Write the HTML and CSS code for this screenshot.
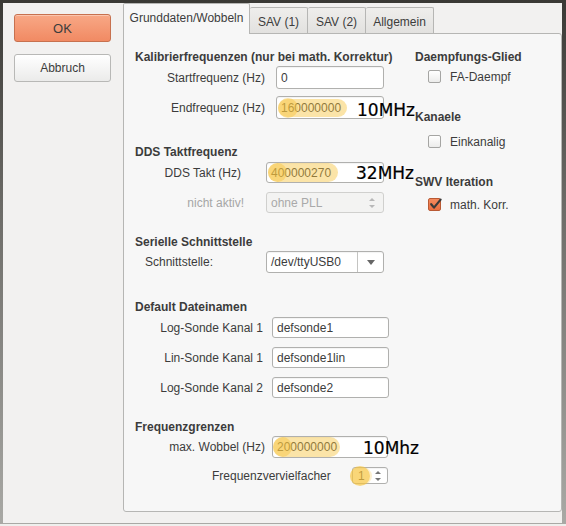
FILE: index.html
```html
<!DOCTYPE html>
<html>
<head>
<meta charset="utf-8">
<link rel="stylesheet" href="styles.css">
</head>
<body>
<div class="frame">
  <div class="window">
    <div class="side">
      <div class="btn btn-ok">OK</div>
      <div class="btn btn-cancel">Abbruch</div>
    </div>
    <div class="tabs">
      <div class="tabbar">
        <div class="tab active">Grunddaten/Wobbeln</div>
        <div class="tab t-sav1">SAV (1)</div>
        <div class="tab t-sav2">SAV (2)</div>
        <div class="tab t-allg">Allgemein</div>
      </div>
      <div class="panel">
        <div class="col-left">
          <div class="h">Kalibrierfrequenzen (nur bei math. Korrektur)</div>
          <div class="row r-start">
            <span class="lbl l-130">Startfrequenz (Hz)</span>
            <div class="field f-kal">0</div>
          </div>
          <div class="row r-end">
            <span class="lbl l-130">Endfrequenz (Hz)</span>
            <div class="field f-kal">160000000
              <span class="hl band b-end"></span><span class="hl dot d-end"></span>
              <span class="note n-end">10MHz</span>
            </div>
          </div>

          <div class="h h-dds">DDS Taktfrequenz</div>
          <div class="row r-dds">
            <span class="lbl l-dds">DDS Takt (Hz)</span>
            <div class="field f-dds">400000270
              <span class="hl band b-dds"></span><span class="hl dot d-dds"></span>
              <span class="note n-dds">32MHz</span>
            </div>
          </div>
          <div class="row r-pll">
            <span class="lbl l-pll disabled">nicht aktiv!</span>
            <div class="field f-pll disabled-field">ohne PLL
              <span class="spin spin-dis"><span class="up"></span><span class="dn"></span></span>
            </div>
          </div>

          <div class="h h-ser">Serielle Schnittstelle</div>
          <div class="row r-ser">
            <span class="lbl l-ser">Schnittstelle:</span>
            <div class="field f-ser"><span class="combo-text">/dev/ttyUSB0</span><span class="combo-btn"><span class="tri"></span></span></div>
          </div>

          <div class="h h-def">Default Dateinamen</div>
          <div class="row r-def1">
            <span class="lbl l-def">Log-Sonde Kanal 1</span>
            <div class="field f-def">defsonde1</div>
          </div>
          <div class="row r-def">
            <span class="lbl l-def">Lin-Sonde Kanal 1</span>
            <div class="field f-def">defsonde1lin</div>
          </div>
          <div class="row r-def">
            <span class="lbl l-def">Log-Sonde Kanal 2</span>
            <div class="field f-def">defsonde2</div>
          </div>

          <div class="h h-fg">Frequenzgrenzen</div>
          <div class="row r-mw">
            <span class="lbl l-mw">max. Wobbel (Hz)</span>
            <div class="field f-mw">200000000
              <span class="hl band b-mw"></span><span class="hl dot d-mw"></span>
              <span class="note n-mw">10Mhz</span>
            </div>
          </div>
          <div class="row r-fv">
            <span class="lbl l-fv">Frequenzvervielfacher</span>
            <div class="field f-fv">1
              <span class="spin"><span class="up"></span><span class="dn"></span></span>
              <span class="hl dot d-fv"></span><span class="hl band b-fv"></span>
            </div>
          </div>
        </div>
        <div class="col-right">
          <div class="h">Daempfungs-Glied</div>
          <div class="chkrow c1"><span class="chk"></span><span class="clbl">FA-Daempf</span></div>
          <div class="h h-kan">Kanaele</div>
          <div class="chkrow c2"><span class="chk"></span><span class="clbl">Einkanalig</span></div>
          <div class="h h-swv">SWV Iteration</div>
          <div class="chkrow c3"><span class="chk checked"><svg width="15" height="15" viewBox="0 0 15 15"><path d="M3.2 7.2 L6 10.6 L12.6 2.6" fill="none" stroke="#3a3a3a" stroke-width="2.2" stroke-linecap="round" stroke-linejoin="round"/></svg></span><span class="clbl">math. Korr.</span></div>
        </div>
      </div>
    </div>
  </div>
</div>
</body>
</html>
```

FILE: styles.css
```css
html, body {
  margin: 0;
  padding: 0;
  background: #efefed;
}
body {
  width: 566px;
  height: 526px;
  overflow: hidden;
  font-family: "Liberation Sans", Arial, sans-serif;
  font-size: 12px;
  color: #3c3c3c;
}
.frame {
  width: 566px;
  height: 524px;
  box-sizing: border-box;
  padding: 3px 4px 1px 3px;
  background: linear-gradient(#3a3935, #6d6c68 40%, #a9a9a5);
}
.window {
  width: 559px;
  height: 520px;
  background: #f2f1f0;
  display: flex;
}
.side {
  width: 120px;
  flex: none;
  padding-top: 11px;
  box-sizing: border-box;
}
.btn {
  margin-left: 11px;
  width: 97px;
  height: 28px;
  box-sizing: border-box;
  border-radius: 3px;
  display: flex;
  align-items: center;
  justify-content: center;
  color: #3c3c3c;
}
.btn-ok {
  font-size: 13px;
  background: linear-gradient(#f8a886, #f18a63);
  border: 1px solid #c7714f;
  box-shadow: inset 0 1px 0 rgba(255,255,255,0.35);
}
.btn-cancel {
  margin-top: 12px;
  background: linear-gradient(#ffffff, #ebebea);
  border: 1px solid #b8b8b6;
}
.tabs {
  width: 439px;
  flex: none;
  display: flex;
  flex-direction: column;
}
.tabbar {
  height: 30px;
  display: flex;
  align-items: flex-end;
}
.tab {
  box-sizing: border-box;
  height: 26px;
  border: 1px solid #b6b6b4;
  border-bottom: none;
  border-left: none;
  background: linear-gradient(#efeeec, #e2e1df);
  display: flex;
  align-items: center;
  justify-content: center;
  padding-top: 2px;
  border-radius: 2px 2px 0 0;
}
.tab.active {
  width: 127px;
  height: 31px;
  margin-bottom: -1px;
  border-left: 1px solid #b6b6b4;
  background: #f7f7f7;
  position: relative;
  z-index: 2;
  padding-top: 0;
  padding-bottom: 2px;
}
.t-sav1 { width: 58px; }
.t-sav2 { width: 58px; }
.t-allg { width: 68px; }
.panel {
  position: relative;
  z-index: 1;
  height: 479px;
  box-sizing: border-box;
  border: 1px solid #b6b6b4;
  border-radius: 0 3px 3px 3px;
  background: #f7f7f7;
  display: flex;
  padding: 16px 0 0 11px;
}
.col-left {
  width: 280px;
  flex: none;
}
.col-right {
  flex: 1;
}
.h {
  font-weight: bold;
  height: 14px;
  line-height: 14px;
  white-space: nowrap;
}
.row {
  display: flex;
  align-items: center;
  white-space: nowrap;
}
.lbl {
  flex: none;
  box-sizing: border-box;
  text-align: right;
}
.disabled { color: #a6a6a6; }
.field {
  position: relative;
  flex: none;
  box-sizing: border-box;
  border: 1px solid #b0b0ae;
  border-radius: 3px;
  background: #fff;
  box-shadow: inset 0 1px 1px rgba(0,0,0,0.05);
  display: flex;
  align-items: center;
  padding-left: 4px;
  color: #3c3c3c;
}
.r-start { margin-top: 2px; height: 23px; }
.r-end { margin-top: 7px; height: 23px; }
.l-130 { width: 130px; }
.f-kal { margin-left: 11px; width: 108px; height: 23px; }

.h-dds { margin-top: 26px; }
.r-dds { margin-top: 3px; height: 21px; }
.l-dds { width: 106px; }
.f-dds { margin-left: 25px; width: 118px; height: 21px; }
.r-pll { margin-top: 9px; height: 21px; }
.l-pll { width: 109px; }
.f-pll { margin-left: 22px; width: 118px; height: 21px; }
.disabled-field {
  background: #f3f3f2;
  border-color: #d0d0ce;
  color: #a9a9a9;
  box-shadow: none;
}

.h-ser { margin-top: 22px; }
.r-ser { margin-top: 2px; height: 22px; }
.l-ser { width: 131px; text-align: left; padding-left: 10px; }
.f-ser { width: 118px; height: 22px; padding-left: 0; }
.combo-text { flex: 1; padding-left: 4px; }
.combo-btn {
  width: 25px;
  height: 100%;
  border-left: 1px solid #c4c4c2;
  display: flex;
  align-items: center;
  justify-content: center;
}
.tri {
  width: 0;
  height: 0;
  border-left: 4px solid transparent;
  border-right: 4px solid transparent;
  border-top: 5px solid #666;
  margin-top: 1px;
}

.h-def { margin-top: 27px; }
.r-def1 { margin-top: 3px; height: 21px; }
.r-def { margin-top: 9px; height: 21px; }
.l-def { width: 128px; }
.f-def { margin-left: 9px; width: 117px; height: 21px; }

.h-fg { margin-top: 22px; }
.r-mw { margin-top: 2px; height: 22px; }
.l-mw { width: 130px; }
.f-mw { margin-left: 7px; width: 116px; height: 22px; }
.r-fv { margin-top: 9px; height: 17px; }
.l-fv { width: 217px; text-align: left; padding-left: 77px; }
.f-fv { width: 36px; height: 17px; padding-left: 5px; }

.spin {
  position: absolute;
  right: 6px;
  top: 0;
  bottom: 0;
  width: 7px;
  display: flex;
  flex-direction: column;
  justify-content: center;
  align-items: center;
  gap: 4px;
}
.spin .up {
  width: 0; height: 0;
  border-left: 3px solid transparent;
  border-right: 3px solid transparent;
  border-bottom: 3px solid #777;
}
.spin .dn {
  width: 0; height: 0;
  border-left: 3px solid transparent;
  border-right: 3px solid transparent;
  border-top: 3px solid #777;
}
.spin-dis { right: 8px; }
.spin-dis .up { border-bottom-color: #b8b8b8; }
.spin-dis .dn { border-top-color: #b8b8b8; }

.hl {
  position: absolute;
  background: rgba(246, 196, 62, 0.45);
  pointer-events: none;
}
.band { border-radius: 10px; }
.dot { border-radius: 50%; }
.b-end { left: 1px; top: 2px; width: 69px; height: 18px; }
.d-end { left: 1px; top: 1px; width: 20px; height: 20px; }
.b-dds { left: 1px; top: 0px; width: 70px; height: 19px; }
.d-dds { left: 1px; top: 0px; width: 19px; height: 19px; }
.b-mw { left: 0px; top: 0px; width: 67px; height: 20px; }
.d-mw { left: 0px; top: 0px; width: 19px; height: 20px; }
.d-fv { left: -3px; top: -2px; width: 20px; height: 20px; background: rgba(246, 196, 62, 0.6); }
.b-fv { left: -3px; top: -1px; width: 22px; height: 18px; border-radius: 9px; background: rgba(246, 196, 62, 0.25); }

.note {
  position: absolute;
  font-family: "DejaVu Sans", sans-serif;
  font-size: 17px;
  line-height: 17px;
  color: #000;
  white-space: nowrap;
  -webkit-text-stroke: 0.2px #000;
}
.n-end { left: 80px; top: 5px; }
.n-dds { left: 89px; top: 2px; }
.n-mw { left: 90px; top: 3px; }

.chkrow {
  display: flex;
  align-items: center;
  height: 13px;
  white-space: nowrap;
}
.c1 { margin-top: 6px; }
.c2 { margin-top: 11px; }
.c3 { margin-top: 9px; }
.h-kan { margin-top: 27px; }
.h-swv { margin-top: 27px; }
.chk {
  position: relative;
  margin-left: 13px;
  width: 13px;
  height: 13px;
  box-sizing: border-box;
  border: 1px solid #a5a5a3;
  border-radius: 2px;
  background: linear-gradient(#ffffff, #ececeb);
  flex: none;
}
.chk.checked {
  background: linear-gradient(#f48a5e, #ea6f40);
  border-color: #b95a34;
}
.chk svg {
  position: absolute;
  left: -1px;
  top: -2px;
}
.clbl { margin-left: 9px; }
```
